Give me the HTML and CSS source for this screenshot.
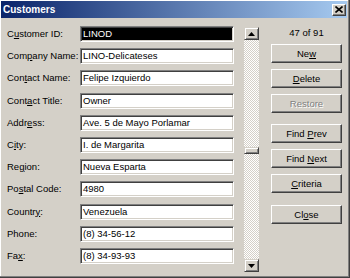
FILE: index.html
```html
<!DOCTYPE html>
<html>
<head>
<meta charset="utf-8">
<link rel="stylesheet" href="styles.css">
</head>
<body>
<div class="window">
  <div class="titlebar">
    <span class="title">Customers</span>
    <span class="close"><svg width="8" height="7" viewBox="0 0 8 7"><path d="M0.5 0.5 L7.5 6.5 M7.5 0.5 L0.5 6.5" stroke="#000" stroke-width="1.6" fill="none"/></svg></span>
  </div>
  <div class="content">
    <div class="fields">
      <span class="lbl">C<u>u</u>stomer ID:</span><div class="box selected">LINOD</div>
      <span class="lbl">Com<u>p</u>any Name:</span><div class="box">LINO-Delicateses</div>
      <span class="lbl">Con<u>t</u>act Name:</span><div class="box">Felipe Izquierdo</div>
      <span class="lbl">Cont<u>a</u>ct Title:</span><div class="box">Owner</div>
      <span class="lbl">Addr<u>e</u>ss:</span><div class="box">Ave. 5 de Mayo Porlamar</div>
      <span class="lbl">C<u>i</u>ty:</span><div class="box">I. de Margarita</div>
      <span class="lbl">Re<u>g</u>ion:</span><div class="box">Nueva Esparta</div>
      <span class="lbl">Po<u>s</u>tal Code:</span><div class="box">4980</div>
      <span class="lbl">Countr<u>y</u>:</span><div class="box">Venezuela</div>
      <span class="lbl">Phone:</span><div class="box">(8) 34-56-12</div>
      <span class="lbl">Fa<u>x</u>:</span><div class="box">(8) 34-93-93</div>
    </div>
    <div class="scrollbar">
      <div class="sb-btn"><svg width="7" height="4" viewBox="0 0 7 4"><polygon points="3.5,0 7,4 0,4" fill="#000"/></svg></div>
      <div class="sb-track"><div class="sb-thumb" style="margin-top:107px"></div></div>
      <div class="sb-btn"><svg width="7" height="4" viewBox="0 0 7 4"><polygon points="0,0 7,0 3.5,4" fill="#000"/></svg></div>
    </div>
    <div class="buttons">
      <div class="counter">47 of 91</div>
      <div class="btn">Ne<u>w</u></div>
      <div class="btn"><u>D</u>elete</div>
      <div class="btn disabled">Restore</div>
      <div class="btn gap1">Find <u>P</u>rev</div>
      <div class="btn">Find <u>N</u>ext</div>
      <div class="btn"><u>C</u>riteria</div>
      <div class="btn gap2">Cl<u>o</u>se</div>
    </div>
  </div>
</div>
</body>
</html>
```

FILE: styles.css
```css
html, body {
  margin: 0;
  padding: 0;
  background: #d4d0c8;
}
body {
  width: 350px;
  height: 278px;
  overflow: hidden;
  font-family: "Liberation Sans", Arial, sans-serif;
  font-size: 9.5px;
  color: #000;
}
.window {
  box-sizing: border-box;
  width: 350px;
  height: 278px;
  padding: 1px 3px 3px 1px;
  background: #d4d0c8;
  box-shadow: inset -1px -1px #404040, inset -2px -2px #808080, inset 1px 1px #ffffff;
  display: flex;
  flex-direction: column;
}
.titlebar {
  height: 17px;
  display: flex;
  align-items: center;
  justify-content: space-between;
  background: linear-gradient(to right, #0a246a, #a6caf0);
  padding-left: 2px;
}
.title {
  color: #fff;
  font-weight: bold;
  font-size: 10px;
  letter-spacing: 0;
}
.close {
  width: 14px;
  height: 12px;
  box-sizing: border-box;
  margin-right: 1px;
  background: #d4d0c8;
  border: 1px solid;
  border-color: #fff #404040 #404040 #fff;
  box-shadow: inset -1px -1px #808080;
  display: flex;
  align-items: center;
  justify-content: center;
}
.close svg { display: block; }
.content {
  display: flex;
  padding: 8px 0 0 6px;
}
.fields {
  display: grid;
  grid-template-columns: 73px 154px;
  grid-auto-rows: 16px;
  row-gap: 6.2px;
}
.lbl {
  line-height: 16px;
  white-space: nowrap;
}
.box {
  box-sizing: border-box;
  height: 16px;
  background: #fff;
  border: 1px solid;
  border-color: #808080 #fff #fff #808080;
  box-shadow: inset 1px 1px #404040, inset -1px -1px #d4d0c8;
  padding: 0 0 0 2px;
  line-height: 14px;
  white-space: nowrap;
  overflow: hidden;
}
.box.selected {
  background: #000;
  color: #fff;
}
.scrollbar {
  width: 15px;
  height: 245px;
  margin: 1px 0 0 10px;
  display: flex;
  flex-direction: column;
}
.sb-btn, .sb-thumb {
  box-sizing: border-box;
  background: #d4d0c8;
  border: 1px solid;
  border-color: #d4d0c8 #404040 #404040 #d4d0c8;
  box-shadow: inset 1px 1px #fff, inset -1px -1px #808080;
}
.sb-btn {
  height: 13px;
  display: flex;
  align-items: center;
  justify-content: center;
}
.sb-btn svg { display: block; }
.sb-track {
  flex: 1;
  display: flex;
  flex-direction: column;
  background: repeating-conic-gradient(#ffffff 0 25%, #d4d0c8 0 50%) 0 0 / 2px 2px;
}
.sb-thumb {
  height: 7px;
}
.buttons {
  width: 71px;
  margin-left: 12px;
  display: flex;
  flex-direction: column;
  gap: 6px;
}
.counter {
  height: 12px;
  line-height: 13px;
  text-align: center;
}
.btn {
  box-sizing: border-box;
  height: 19px;
  line-height: 17px;
  text-align: center;
  background: #d4d0c8;
  border: 1px solid;
  border-color: #fff #404040 #404040 #fff;
  box-shadow: inset -1px -1px #808080;
}
.btn.disabled {
  color: #808080;
  text-shadow: 1px 1px #fff;
}
.btn.gap1 { margin-top: 5px; }
.btn.gap2 { margin-top: 6px; }
```
